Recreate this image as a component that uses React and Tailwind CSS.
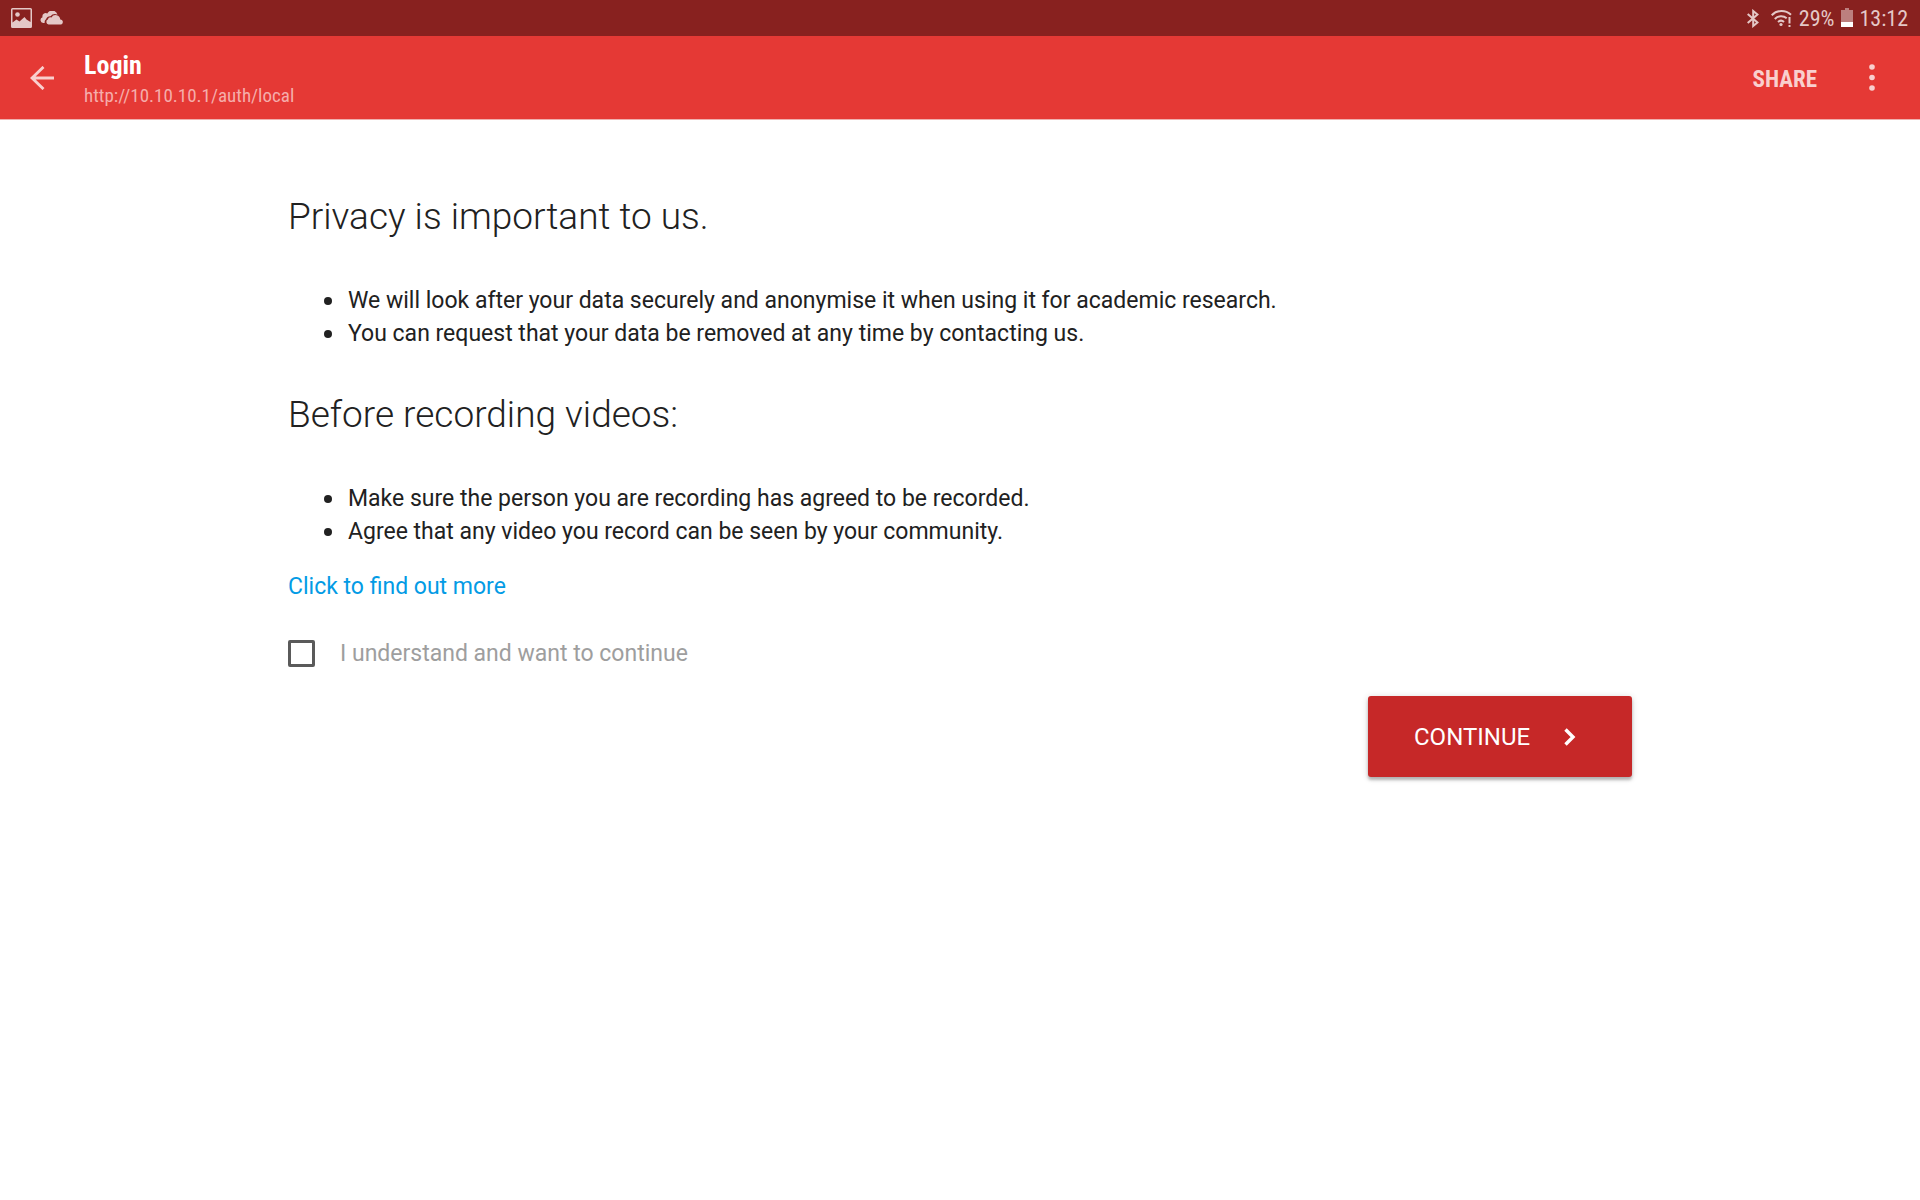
import React from "react";

const sections = [
  {
    title: "Privacy is important to us.",
    items: [
      "We will look after your data securely and anonymise it when using it for academic research.",
      "You can request that your data be removed at any time by contacting us.",
    ],
  },
  {
    title: "Before recording videos:",
    items: [
      "Make sure the person you are recording has agreed to be recorded.",
      "Agree that any video you record can be seen by your community.",
    ],
  },
];

function StatusBar() {
  return (
    <div className="flex h-9 items-center justify-between bg-[#88211f] pl-[11px] pr-3 pt-0.5 text-[#e4c8c7]">
      <div className="mb-0.5 flex items-center gap-2">
        <svg className="h-5 w-[21px]" viewBox="0 0 21 20" fill="currentColor" aria-hidden="true">
          <path
            fillRule="evenodd"
            d="M1.500 0h18A1.500 1.500 0 0 1 21 1.500v17a1.500 1.500 0 0 1-1.500 1.500h-18A1.500 1.500 0 0 1 0 18.500v-17A1.500 1.500 0 0 1 1.500 0Zm0 1.500v13l4-3 3 2 5-4.500 2 2.500 4 2.500V1.500Z"
          />
          <circle cx="6.500" cy="6.500" r="2.300" />
        </svg>
        <svg className="h-[14px] w-6" viewBox="0 0 24 14" fill="currentColor" aria-hidden="true">
          <path d="M4.700 12H3.200A3 3 0 0 1 2.500 6.200 3.300 3.300 0 0 1 7.300 2.500 5.500 5.500 0 0 1 17.500 3.700 6 6 0 0 0 10.500 5.200 4.500 4.500 0 0 0 6 8.200 4 4 0 0 0 4.700 12Z" />
          <path d="M8.500 13.500a2.600 2.600 0 0 1-.7-4.900 3 3 0 0 1 3.600-2.100 4.800 4.800 0 0 1 8.900 2 2.600 2.600 0 0 1 1 5Z" />
        </svg>
      </div>
      <div className="flex items-center text-[22px] leading-7">
        <svg className="mb-0.5 mr-3 h-[19px] w-3" viewBox="0 0 12 19" fill="none" stroke="currentColor" strokeWidth="2" aria-hidden="true">
          <path d="M.7 5 10.500 13.500 6.200 17V2l4.300 3.500L.7 14" />
        </svg>
        <svg className="mb-0.5 mr-[7px] h-[17px] w-[21px]" viewBox="0 0 21 17" fill="none" stroke="currentColor" strokeWidth="2" aria-hidden="true">
          <path d="M.7 5.200C6-.3 14.500-.3 20 4.700M3.800 9C7 5.400 12.500 5.400 15.700 8.200M7 12c2-1.700 4.200-1.700 6 0" />
          <circle cx="10" cy="14.500" r="1.600" fill="currentColor" stroke="none" />
          <path d="M18.500 7v6.500M18.500 15v2" />
        </svg>
        <span>29%</span>
        <svg className="mb-[3px] ml-[7px] mr-1.5 h-[19px] w-3" viewBox="0 0 12 19" aria-hidden="true">
          <path d="M4 0h4v2h4v12H0V2h4Z" fill="#bc7f7e" />
          <path d="M0 14h12v5H0Z" fill="#fff" />
        </svg>
        <span>13:12</span>
      </div>
    </div>
  );
}

function AppBar() {
  return (
    <header className="flex h-[84px] items-center border-b border-[#efb0ae] bg-[#e53935] pr-9">
      <button type="button" aria-label="Back" className="ml-[30px] mr-[30px] text-[#f9cfce]">
        <svg className="h-6 w-6" viewBox="0 0 24 24" fill="none" stroke="currentColor" strokeWidth="2.8" aria-hidden="true">
          <path d="M24 12H2M13.500 .9 2 12l11.500 11.100" />
        </svg>
      </button>
      <div className="flex flex-1 flex-col pt-1">
        <h1 className="text-[26px] leading-8 font-bold text-white">Login</h1>
        <p className="text-[19px] leading-[30px] text-[#f5adab]">http://10.10.10.1/auth/local</p>
      </div>
      <button type="button" className="mr-11 pt-1 text-[23px] leading-8 font-bold text-[#f9cfce]">
        SHARE
      </button>
      <button type="button" aria-label="More options" className="mr-px px-2 text-[#f9cfce]">
        <svg className="h-[27px] w-[6px]" viewBox="0 0 6 27" fill="currentColor" aria-hidden="true">
          <circle cx="3" cy="3" r="2.8" />
          <circle cx="3" cy="13.500" r="2.8" />
          <circle cx="3" cy="24" r="2.8" />
        </svg>
      </button>
    </header>
  );
}

export default function App() {
  return (
    <div className="min-h-screen bg-white font-['Roboto',sans-serif] text-[23px] leading-[33px] text-[#212121]">
      <div className="font-['Roboto_Condensed','Roboto',sans-serif]">
        <StatusBar />
        <AppBar />
      </div>
      <main className="mx-auto w-[70%] pt-[77px]">
        {sections.map((s) => (
          <section key={s.title} className="mb-[45px]">
            <h2 className="mb-[47px] text-[37px] leading-[40px] font-light">{s.title}</h2>
            <ul className="pl-9">
              {s.items.map((t) => (
                <li
                  key={t}
                  className="flex items-center gap-4 before:size-2 before:shrink-0 before:rounded-full before:bg-[#212121] before:content-['']"
                >
                  {t}
                </li>
              ))}
            </ul>
          </section>
        ))}
        <a href="#more" className="-mt-[23px] block w-fit text-[#039be5]">
          Click to find out more
        </a>
        <label className="mt-[34px] flex w-fit items-center gap-[25px] text-[#9e9e9e]">
          <input
            type="checkbox"
            className="size-[27px] appearance-none rounded-[2px] border-3 border-[#5a5a5a] bg-white checked:bg-[#5a5a5a]"
          />
          <span>I understand and want to continue</span>
        </label>
        <div className="mt-[26px] flex justify-end">
          <button
            type="button"
            className="flex h-[81px] w-[264px] items-center rounded-[3px] bg-[#c62828] pl-[46px] text-2xl text-white shadow-[0_3px_3px_rgba(0,0,0,0.24),0_1px_7px_rgba(0,0,0,0.16)]"
          >
            CONTINUE
            <svg className="ml-[34px] h-[18px] w-3" viewBox="0 0 12 18" fill="none" stroke="currentColor" strokeWidth="3.4" aria-hidden="true">
              <path d="m1.500 1.500 7.500 7.500-7.500 7.500" />
            </svg>
          </button>
        </div>
      </main>
    </div>
  );
}
